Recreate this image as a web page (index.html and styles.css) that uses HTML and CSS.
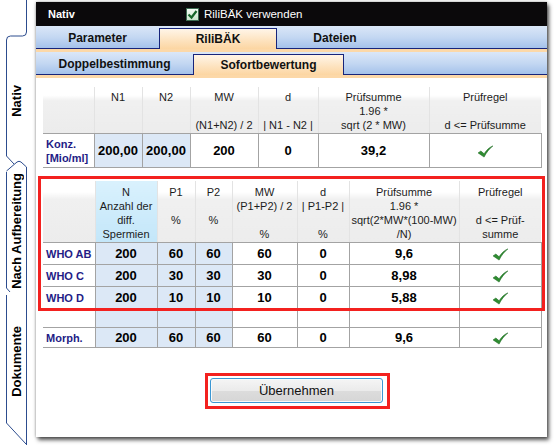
FILE: index.html
```html
<!DOCTYPE html>
<html lang="de">
  <head>
    <meta charset="UTF-8" />
    <title>RiliBÄK Sofortbewertung</title>
    <link rel="stylesheet" href="styles.css">
  </head>
  <body>
    <div class="app">
      <!-- Side tabs -->
      <aside class="side">
        <svg class="side-lines" width="36" height="445" viewBox="0 0 36 445">
          <path d="M26.5 0V32Q26.5 36 22.5 36H10.5Q6.5 36 6.5 40V156L14 164" />
          <path d="M6.5 171L17 162Q19 160.5 21 162L26.5 167V445" />
          <path d="M6.5 172V288L10 292" />
          <path d="M6.5 295V423L26 444" />
        </svg>
        <div class="vtab vtab-nativ"><span>Nativ</span></div>
        <div class="vtab vtab-aufb"><span>Nach Aufbereitung</span></div>
        <div class="vtab vtab-doc"><span>Dokumente</span></div>
      </aside>

      <main class="panel">
        <div class="titlebar">
          <span class="title">Nativ</span>
          <label class="chk">
            <span class="chk-box">
              <svg width="11" height="11" viewBox="0 0 11 11">
                <path d="M1.5 5.5L4.5 8.5L9.5 2" />
              </svg>
            </span>
            RiliBÄK verwenden
          </label>
        </div>

        <div class="tabs">
          <div class="tab tab-param">Parameter</div>
          <div class="tab tab-rili active">RiliBÄK</div>
          <div class="tab tab-files">Dateien</div>
          <div class="tab-fill"></div>
        </div>
        <div class="tabs">
          <div class="tab tab-double">Doppelbestimmung</div>
          <div class="tab tab-quick active">Sofortbewertung</div>
          <div class="tab-fill"></div>
        </div>

        <div class="content">
          <!-- Doppelbestimmung Konzentration -->
          <table class="grid grid-konz">
            <colgroup>
              <col style="width: 51px" />
              <col style="width: 48px" />
              <col style="width: 48px" />
              <col style="width: 68px" />
              <col style="width: 60px" />
              <col style="width: 111px" />
              <col style="width: 112px" />
            </colgroup>
            <thead>
              <tr>
                <th></th>
                <th>N1<br />&nbsp;<br />&nbsp;</th>
                <th>N2<br />&nbsp;<br />&nbsp;</th>
                <th>MW<br />&nbsp;<br />(N1+N2) / 2</th>
                <th>d<br />&nbsp;<br />| N1 - N2 |</th>
                <th>Prüfsumme<br />1.96 *<br />sqrt (2 * MW)</th>
                <th>Prüfregel<br />&nbsp;<br />d &lt;= Prüfsumme</th>
              </tr>
            </thead>
            <tbody>
              <tr class="row-konz">
                <td class="label">Konz.<br />[Mio/ml]</td>
                <td class="in">200,00</td>
                <td class="in">200,00</td>
                <td>200</td>
                <td>0</td>
                <td>39,2</td>
                <td><svg class="ok" viewBox="0 0 18 14"><path d="M1 8.5L4 6.5L7.5 9.5C10 5.5 13 2.5 17 1C13 4 10 8 7.5 13Z" /></svg></td>
              </tr>
            </tbody>
          </table>

          <!-- Differenzierung WHO -->
          <div class="mark mark-who">
            <table class="grid grid-who">
              <colgroup>
                <col style="width: 52px" />
                <col style="width: 62px" />
                <col style="width: 38px" />
                <col style="width: 37px" />
                <col style="width: 65px" />
                <col style="width: 52px" />
                <col style="width: 110px" />
                <col style="width: 82px" />
              </colgroup>
              <thead>
                <tr>
                  <th></th>
                  <th class="in-head">N<br />Anzahl der<br />diff.<br />Spermien</th>
                  <th>P1<br />&nbsp;<br />%<br />&nbsp;</th>
                  <th>P2<br />&nbsp;<br />%<br />&nbsp;</th>
                  <th>MW<br />(P1+P2) / 2<br />&nbsp;<br />%</th>
                  <th>d<br />| P1-P2 |<br />&nbsp;<br />%</th>
                  <th>Prüfsumme<br />1.96 *<br />sqrt(2*MW*(100-MW)<br />/N)</th>
                  <th>Prüfregel<br />&nbsp;<br />d &lt;= Prüf-<br />summe</th>
                </tr>
              </thead>
              <tbody>
                <tr>
                  <td class="label">WHO AB</td>
                  <td class="in">200</td>
                  <td class="in">60</td>
                  <td class="in">60</td>
                  <td>60</td>
                  <td>0</td>
                  <td>9,6</td>
                  <td><svg class="ok" viewBox="0 0 18 14"><path d="M1 8.5L4 6.5L7.5 9.5C10 5.5 13 2.5 17 1C13 4 10 8 7.5 13Z" /></svg></td>
                </tr>
                <tr>
                  <td class="label">WHO C</td>
                  <td class="in">200</td>
                  <td class="in">30</td>
                  <td class="in">30</td>
                  <td>30</td>
                  <td>0</td>
                  <td>8,98</td>
                  <td><svg class="ok" viewBox="0 0 18 14"><path d="M1 8.5L4 6.5L7.5 9.5C10 5.5 13 2.5 17 1C13 4 10 8 7.5 13Z" /></svg></td>
                </tr>
                <tr>
                  <td class="label">WHO D</td>
                  <td class="in">200</td>
                  <td class="in">10</td>
                  <td class="in">10</td>
                  <td>10</td>
                  <td>0</td>
                  <td>5,88</td>
                  <td><svg class="ok" viewBox="0 0 18 14"><path d="M1 8.5L4 6.5L7.5 9.5C10 5.5 13 2.5 17 1C13 4 10 8 7.5 13Z" /></svg></td>
                </tr>
              </tbody>
            </table>
          </div>

          <!-- Morphologie -->
          <table class="grid grid-morph">
            <colgroup>
              <col style="width: 52px" />
              <col style="width: 62px" />
              <col style="width: 38px" />
              <col style="width: 37px" />
              <col style="width: 65px" />
              <col style="width: 52px" />
              <col style="width: 110px" />
              <col style="width: 82px" />
            </colgroup>
            <tbody>
              <tr class="row-empty">
                <td></td>
                <td class="in"></td>
                <td class="in"></td>
                <td class="in"></td>
                <td></td>
                <td></td>
                <td></td>
                <td></td>
              </tr>
              <tr class="row-morph">
                <td class="label">Morph.</td>
                <td class="in">200</td>
                <td class="in">60</td>
                <td class="in">60</td>
                <td>60</td>
                <td>0</td>
                <td>9,6</td>
                <td><svg class="ok" viewBox="0 0 18 14"><path d="M1 8.5L4 6.5L7.5 9.5C10 5.5 13 2.5 17 1C13 4 10 8 7.5 13Z" /></svg></td>
              </tr>
            </tbody>
          </table>

          <div class="mark mark-btn">
            <button type="button" class="btn">Übernehmen</button>
          </div>
        </div>
      </main>
    </div>
  </body>
</html>
```

FILE: styles.css
```css
/* General */
body {
  margin: 0;
  font-family: "Liberation Sans", Arial, sans-serif;
  background: #fff;
  color: #000;
}
.app {
  display: flex;
  width: 554px;
  height: 445px;
  overflow: hidden;
}

/* Side tabs */
.side {
  position: relative;
  width: 36px;
  flex: none;
  padding-top: 36px;
  box-sizing: border-box;
}
.side-lines {
  position: absolute;
  left: 0;
  top: 0;
  fill: none;
  stroke: #2c4c8e;
  stroke-width: 1;
}
.vtab {
  width: 21px;
  margin-left: 6px;
  display: flex;
  align-items: center;
  justify-content: center;
}
.vtab span {
  writing-mode: vertical-rl;
  transform: rotate(180deg);
  font-weight: bold;
  font-size: 13px;
  white-space: nowrap;
}
.vtab-nativ {
  height: 129px;
}
.vtab-aufb {
  height: 132px;
}
.vtab-doc {
  height: 128px;
}

/* Panel */
.panel {
  width: 511px;
  height: 435px;
  margin-top: 2px;
  flex: none;
  background: #fff;
  box-shadow: 0 0 3px rgba(0, 0, 0, 0.35), 2px 3px 4px rgba(0, 0, 0, 0.65);
}
.titlebar {
  height: 24px;
  background: #0b090b;
  color: #fff;
  display: flex;
  align-items: center;
  padding-left: 12px;
}
.title {
  width: 138px;
  font-weight: bold;
  font-size: 11px;
}
.chk {
  display: flex;
  align-items: center;
  font-size: 11.5px;
}
.chk-box {
  width: 11px;
  height: 11px;
  margin-right: 5px;
  border: 1px solid #3d6b52;
  background: linear-gradient(#f4fbf4, #c9e4cc);
  display: flex;
}
.chk-box path {
  fill: none;
  stroke: #17652a;
  stroke-width: 2.2;
}

/* Tab rows */
.tabs {
  display: flex;
  height: 23px;
  background: linear-gradient(#dbe7f8, #c3d7f2 50%, #a2c0ea);
  border-bottom: 3px solid #fcd8a8;
}
.tab {
  box-sizing: border-box;
  border-bottom: 1px solid #17247a;
  display: flex;
  align-items: center;
  justify-content: center;
  font-weight: bold;
  font-size: 12px;
  color: #111;
  padding-top: 1px;
}
.tab.active {
  margin-top: 2px;
  border: 1px solid #17247a;
  border-bottom: none;
  background: linear-gradient(#fff5e8, #fde2bd 60%, #fcd6a2);
  padding-top: 0;
}
.tab-fill {
  flex: 1;
  border-bottom: 1px solid #17247a;
}
.tab-param {
  width: 123px;
}
.tab-rili {
  width: 118px;
}
.tab-files {
  width: 116px;
}
.tab-double {
  width: 157px;
}
.tab-quick {
  width: 151px;
}

/* Content */
.content {
  padding: 9px 2px 0 2px;
}
.grid {
  width: 498px;
  table-layout: fixed;
  border-collapse: collapse;
  margin-left: 5px;
  font-size: 13px;
}
.grid th {
  font-weight: normal;
  font-size: 11px;
  line-height: 14px;
  color: #1c1c1c;
  vertical-align: top;
  padding: 3px 0 1px;
  white-space: nowrap;
  background: linear-gradient(#fff, #fff 18%, #f0f0f0 30%, #ececec);
  border-left: 1px solid #e3e3e3;
  border-bottom: 1px solid #a3a3a3;
}
.grid th:first-child {
  border-left: none;
}
.grid td {
  text-align: center;
  font-weight: bold;
  border: 1px solid #a3a3a3;
  border-left-width: 1px;
  padding: 0;
}
.grid td:first-child {
  border-left: none;
}
.grid td.label {
  text-align: left;
  font-size: 11px;
  color: #241c86;
  padding-left: 3px;
  line-height: 14px;
}
.grid td.in {
  background: #dce8f6;
}
.grid th.in-head {
  background: linear-gradient(#d9f1fd, #c3e6f9);
}
.row-konz td {
  height: 33px;
}
.grid-who th {
  padding-top: 4px;
}
.grid-who td {
  height: 21px;
}
.grid-who tbody tr:last-child td {
  border-bottom: none;
}
.row-empty td {
  height: 16px;
  border-top: none;
}
.row-morph td {
  height: 19px;
}
.ok {
  width: 17px;
  height: 13px;
  vertical-align: middle;
  fill: #2e8d31;
  stroke: #1f6b22;
  stroke-width: 0.6;
}

/* Red marker boxes */
.mark {
  box-sizing: border-box;
  border: 3px solid #f3211f;
}
.mark-who {
  width: 507px;
  margin-top: 8px;
  padding: 2px 1px 0 2px;
}
.mark-who .grid {
  margin-left: 0;
}
.mark-btn {
  width: fit-content;
  margin: 25px 0 0 167px;
  padding: 2px 4px 3px 2px;
}
.btn {
  display: block;
  width: 173px;
  height: 25px;
  border: 1px solid #3b97d3;
  border-radius: 3px;
  background: linear-gradient(#f5f5f5, #ebebeb 50%, #dcdcdc 52%, #d6d6d6);
  box-shadow: inset 0 0 0 1px #fafafa;
  font-family: "Liberation Sans", Arial, sans-serif;
  font-size: 13px;
  color: #111;
  padding: 0;
}
```
